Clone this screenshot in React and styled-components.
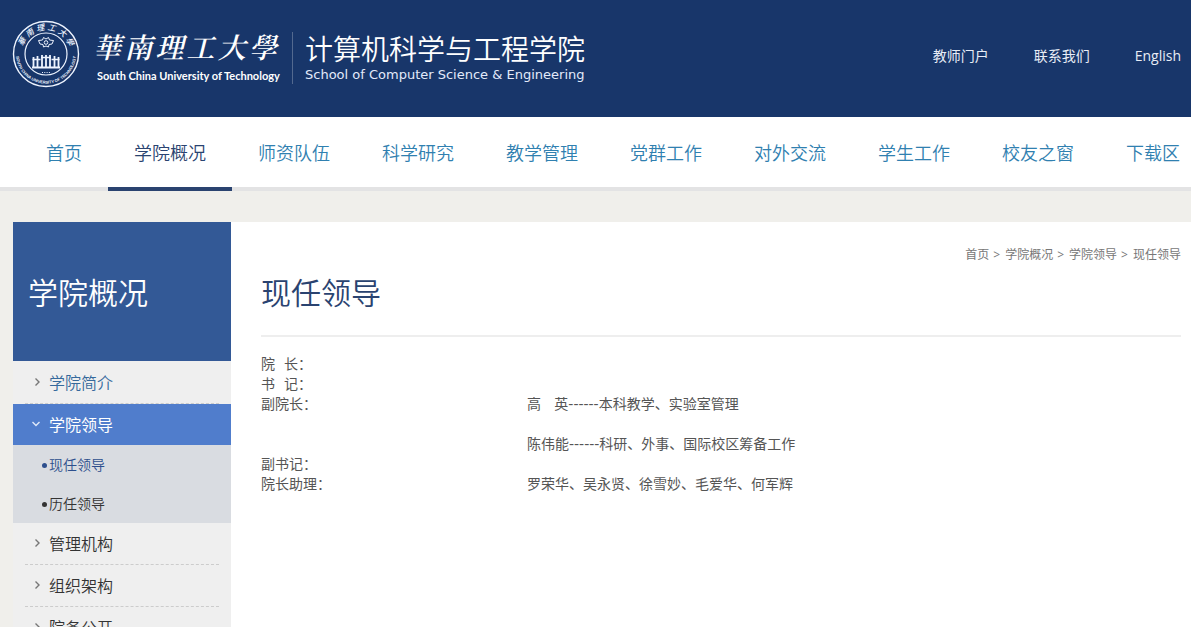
import React from "react";
import styled, { createGlobalStyle } from "styled-components";

const Global = createGlobalStyle`
  * { box-sizing: border-box; }
  body {
    margin: 0;
    background: #f0efeb;
    color: #333;
    font-family: "Open Sans", "Noto Sans CJK SC", sans-serif;
    font-size: 14px;
    font-weight: 350;
  }
  a { color: inherit; text-decoration: none; }
  ul, ol { list-style: none; margin: 0; padding: 0; }
  h1, h2, p { margin: 0; font-weight: inherit; }
`;

const Page = styled.div`
  min-height: 100vh;
  display: flex;
  flex-direction: column;
`;

const Header = styled.header`
  display: flex;
  justify-content: space-between;
  align-items: flex-start;
  height: 117px;
  padding: 20px 10px 0 12px;
  background: #18366a;
  color: #fff;
`;

const Brand = styled.a`
  display: flex;
  align-items: center;
`;

const Seal = styled.svg`
  width: 68px;
  height: 68px;
  display: block;
`;

const University = styled.div`
  display: flex;
  flex-direction: column;
  width: 184px;
  margin-left: 13px;
`;

const Calligraphy = styled.div`
  display: flex;
  justify-content: space-between;
  font-family: "Noto Serif CJK TC", "Noto Sans CJK TC", serif;
  font-size: 28px;
  font-weight: 600;
  line-height: 44px;
  font-style: italic;
`;

const UniversityLatin = styled.div`
  padding-left: 4px;
  font-family: Lato, sans-serif;
  font-size: 11px;
  font-weight: 700;
  line-height: 16px;
  white-space: nowrap;
`;

const School = styled.div`
  margin: 8px 0 0 15px;
  padding-left: 12px;
  border-left: 1px solid #53698f;
  white-space: nowrap;
`;

const SchoolName = styled.div`
  font-size: 28px;
  line-height: 34px;
`;

const SchoolLatin = styled.div`
  font-family: "DejaVu Sans", sans-serif;
  font-size: 13px;
  font-weight: 400;
  line-height: 18px;
  color: #e3eafa;
`;

const TopLinks = styled.nav`
  display: flex;
  gap: 45px;
  padding-top: 26px;
  font-size: 14px;
  font-weight: 400;
  line-height: 20px;
  white-space: nowrap;
  color: #e8edf6;
`;

const MainNav = styled.nav`
  display: flex;
  padding: 0 10px 0 20px;
  background: #fff;
  box-shadow: inset 0 -4px 0 #e3e3e4;
`;

const NavItem = styled.a`
  height: 74px;
  padding: 0 26px;
  border-bottom: 4px solid ${(p) => (p.$active ? "#2a4370" : "transparent")};
  color: ${(p) => (p.$active ? "#2a4370" : "#3080b0")};
  font-size: 18px;
  line-height: 72px;
  white-space: nowrap;
  &:last-child { padding-right: 0; }
`;

const Body = styled.div`
  display: flex;
  flex: 1;
  padding: 31px 0 0 13px;
`;

const Sidebar = styled.aside`
  flex: 0 0 218px;
  background: #efefef;
`;

const SideTitle = styled.h2`
  height: 139px;
  padding-left: 15px;
  background: #335996;
  color: #fff;
  font-size: 30px;
  line-height: 142px;
`;

const SideList = styled.ul`
  padding-top: 1px;
`;

const SideLink = styled.a`
  display: flex;
  align-items: center;
  gap: 5px;
  height: ${(p) => (p.$active ? "41px" : "42px")};
  margin: ${(p) => (p.$active ? "0" : "0 12px")};
  padding: 0 0 1px ${(p) => (p.$active ? "17px" : "5px")};
  border-bottom: ${(p) => (p.$active ? "none" : "1px dashed #ccc")};
  background: ${(p) => (p.$active ? "#507dcc" : "transparent")};
  color: ${(p) => (p.$active ? "#fff" : p.$visited ? "#35699c" : "#333")};
  font-size: 16px;
  font-weight: ${(p) => (p.$active ? 400 : 350)};
  svg { width: 14px; height: 14px; color: ${(p) => (p.$active ? "#dfe8f8" : "#777")}; }
`;

const SubList = styled.ul`
  background: #d9dce1;
`;

const SubLink = styled.a`
  display: flex;
  align-items: center;
  gap: 2px;
  height: 39px;
  padding: 0 0 1px 29px;
  color: ${(p) => (p.$active ? "#2d4f8d" : "#333")};
  font-size: 14px;
  &::before {
    content: "";
    width: 5px;
    height: 5px;
    margin-top: 2px;
    border-radius: 50%;
    background: currentColor;
  }
`;

const Content = styled.main`
  flex: 1;
  min-width: 0;
  padding: 23px 10px 40px 30px;
  background: #fff;
`;

const Crumbs = styled.ol`
  display: flex;
  justify-content: flex-end;
  gap: 4px;
  color: #777;
  font-size: 12px;
  font-weight: 400;
  line-height: 20px;
  li + li::before { content: ">"; margin-right: 5px; }
`;

const Title = styled.h1`
  height: 72px;
  padding-top: 6px;
  border-bottom: 2px solid #eee;
  color: #2a4370;
  font-size: 30px;
  line-height: 44px;
`;

const Leaders = styled.table`
  width: 100%;
  margin-top: 17px;
  border-collapse: collapse;
  table-layout: fixed;
  color: #555;
  font-family: "DejaVu Sans", "Noto Sans CJK SC", sans-serif;
  font-size: 14px;
  font-weight: 400;
  line-height: 20px;
  th, td { padding: 0; height: 20px; text-align: left; vertical-align: top; font-weight: inherit; }
  th { width: 266px; }
  p + p { margin-top: 20px; }
`;

const Chevron = ({ down }) => (
  <svg viewBox="0 0 14 14" fill="none" stroke="currentColor" strokeWidth="1.4" aria-hidden="true">
    <path d={down ? "M2.5 5 6 8.5 9.5 5" : "M5.5 3.5 9 7 5.5 10.5"} />
  </svg>
);

const sealGlyphs = ["華", "南", "理", "工", "大", "學"];

const SealMark = () => (
  <Seal viewBox="0 0 68 68" fill="none" stroke="#eef4ff" aria-label="华南理工大学校徽">
    <defs>
      <path id="sealLower" d="M5 26A30 30 0 1 0 63 26" />
    </defs>
    <circle cx="34" cy="34" r="32.5" strokeWidth="1.4" />
    <circle cx="34" cy="34" r="21" strokeWidth="1.2" />
    <g fill="#eef4ff" stroke="none" fontFamily="Noto Sans CJK TC, sans-serif" fontSize="8" fontStyle="italic" fontWeight="500" textAnchor="middle">
      {sealGlyphs.map((g, i) => (
        <text key={g} x="34" y="10" transform={`rotate(${-62.5 + i * 25} 34 34)`}>{g}</text>
      ))}
    </g>
    <text fill="#eef4ff" stroke="none" fontFamily="Liberation Sans, sans-serif" fontSize="4" fontWeight="700" textAnchor="middle">
      <textPath href="#sealLower" startOffset="50%">SOUTH CHINA UNIVERSITY OF TECHNOLOGY</textPath>
    </text>
    <g strokeWidth="1" strokeLinejoin="round">
      <path d="M34 19 31.5 17.5 30.5 20 26.500 20.500 28 24 31 24.500 31.500 27 34 26 36.500 27 37 24.500 40 24 41.500 20.500 37.500 20 36.500 17.500Z" />
      <circle cx="34" cy="22.500" r="1.800" />
    </g>
    <path d="M20 47.5h28M21.5 47V37M25.5 47V36M30 47V35M34 47V35M38 47V35M42.5 47V36M46.5 47V37" strokeWidth="1.8" />
    <path d="M20.5 39.5h8M29 37.5h10M39.5 39.5h8" strokeWidth="1.3" />
    <path d="M30 52.5h8" strokeWidth="1.2" strokeDasharray="1 1.3" />
  </Seal>
);

const nav = ["首页", "学院概况", "师资队伍", "科学研究", "教学管理", "党群工作", "对外交流", "学生工作", "校友之窗", "下载区"];
const crumbs = ["首页", "学院概况", "学院领导", "现任领导"];
const side = [
  { label: "学院简介", visited: true },
  { label: "学院领导", active: true, children: ["现任领导", "历任领导"] },
  { label: "管理机构" },
  { label: "组织架构" },
  { label: "院务公开" },
];
const leaders = [
  ["院\u00a0\u00a0长：", []],
  ["书\u00a0\u00a0记：", []],
  ["副院长：", ["高\u00a0\u00a0\u00a0英------本科教学、实验室管理", "陈伟能------科研、外事、国际校区筹备工作"]],
  ["副书记：", []],
  ["院长助理：", ["罗荣华、吴永贤、徐雪妙、毛爱华、何军辉"]],
];

export default function App() {
  return (
    <Page lang="zh-CN">
      <Global />
      <Header>
        <Brand href="#">
          <SealMark />
          <University>
            <Calligraphy lang="zh-TW">
              {sealGlyphs.map((g) => <span key={g}>{g}</span>)}
            </Calligraphy>
            <UniversityLatin>South China University of Technology</UniversityLatin>
          </University>
          <School>
            <SchoolName>计算机科学与工程学院</SchoolName>
            <SchoolLatin>School of Computer Science &amp; Engineering</SchoolLatin>
          </School>
        </Brand>
        <TopLinks>
          <a href="#">教师门户</a>
          <a href="#">联系我们</a>
          <a href="#">English</a>
        </TopLinks>
      </Header>
      <MainNav>
        {nav.map((n) => <NavItem key={n} href="#" $active={n === "学院概况"}>{n}</NavItem>)}
      </MainNav>
      <Body>
        <Sidebar>
          <SideTitle>学院概况</SideTitle>
          <SideList>
            {side.map((s) => (
              <li key={s.label}>
                <SideLink href="#" $active={s.active} $visited={s.visited}>
                  <Chevron down={s.active} />
                  {s.label}
                </SideLink>
                {s.children && (
                  <SubList>
                    {s.children.map((c, i) => (
                      <li key={c}><SubLink href="#" $active={i === 0}>{c}</SubLink></li>
                    ))}
                  </SubList>
                )}
              </li>
            ))}
          </SideList>
        </Sidebar>
        <Content>
          <Crumbs>
            {crumbs.map((c) => <li key={c}><a href="#">{c}</a></li>)}
          </Crumbs>
          <Title>现任领导</Title>
          <Leaders>
            <tbody>
              {leaders.map(([role, people]) => (
                <tr key={role}>
                  <th scope="row">{role}</th>
                  <td>{people.map((t) => <p key={t}>{t}</p>)}</td>
                </tr>
              ))}
            </tbody>
          </Leaders>
        </Content>
      </Body>
    </Page>
  );
}
